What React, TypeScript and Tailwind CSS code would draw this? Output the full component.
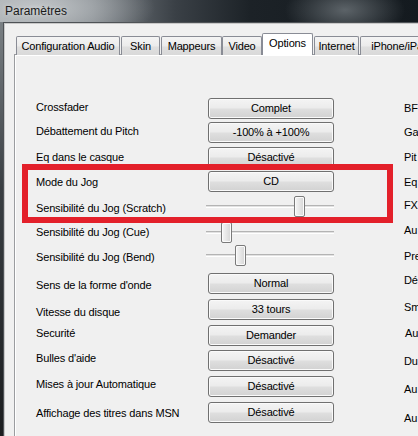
import React from 'react';

type Row = {
  label: string;
  h: string;
  lt: string;
  kind: 'btn' | 'slider';
  text?: string;
  value?: number;
};

const rows: Row[] = [
  { label: 'Crossfader', h: 'h-[24px]', lt: 'pt-[3px]', kind: 'btn', text: 'Complet' },
  { label: 'Débattement du Pitch', h: 'h-[25px]', lt: 'pt-[3px]', kind: 'btn', text: '-100% à +100%' },
  { label: 'Eq dans le casque', h: 'h-[24px]', lt: 'pt-[4px]', kind: 'btn', text: 'Désactivé' },
  { label: 'Mode du Jog', h: 'h-[25px]', lt: 'pt-[5px]', kind: 'btn', text: 'CD' },
  { label: 'Sensibilité du Jog (Scratch)', h: 'h-[26px]', lt: 'pt-[6px]', kind: 'slider', value: 88 },
  { label: 'Sensibilité du Jog (Cue)', h: 'h-[23px]', lt: 'pt-[4px]', kind: 'slider', value: 15 },
  { label: 'Sensibilité du Jog (Bend)', h: 'h-[28px]', lt: 'pt-[6px]', kind: 'slider', value: 29 },
  { label: "Sens de la forme d'onde", h: 'h-[26px]', lt: 'pt-[6px]', kind: 'btn', text: 'Normal' },
  { label: 'Vitesse du disque', h: 'h-[26px]', lt: 'pt-[7px]', kind: 'btn', text: '33 tours' },
  { label: 'Securité', h: 'h-[25px]', lt: 'pt-[2px]', kind: 'btn', text: 'Demander' },
  { label: "Bulles d'aide", h: 'h-[26px]', lt: 'pt-[2px]', kind: 'btn', text: 'Désactivé' },
  { label: 'Mises à jour Automatique', h: 'h-[26px]', lt: 'pt-[2px]', kind: 'btn', text: 'Désactivé' },
  { label: 'Affichage des titres dans MSN', h: 'h-[26px]', lt: 'pt-[5px]', kind: 'btn', text: 'Désactivé' },
];

const rightLabels: { t: string; h: string; x?: string }[] = [
  { t: 'BF', h: 'h-[24px]' },
  { t: 'Ga', h: 'h-[25px]' },
  { t: 'Pit', h: 'h-[25px]' },
  { t: 'Eq', h: 'h-[23px]' },
  { t: 'FX', h: 'h-[25px]' },
  { t: 'Au', h: 'h-[26px]' },
  { t: 'Pre', h: 'h-[24px]' },
  { t: 'Dé', h: 'h-[27px]' },
  { t: 'Sm', h: 'h-[26px]' },
  { t: 'Au', h: 'h-[28px]', x: 'pl-[1px]' },
  { t: 'Du', h: 'h-[28px]' },
  { t: 'Au', h: 'h-[29px]' },
  { t: 'Au', h: 'h-[20px]' },
];

const tabs: { t: string; w: string; sel?: boolean; ml?: string }[] = [
  { t: 'Configuration Audio', w: 'w-[104px]' },
  { t: 'Skin', w: 'w-[39px]', ml: 'ml-[1px]' },
  { t: 'Mappeurs', w: 'w-[61px]', ml: 'ml-[1px]' },
  { t: 'Video', w: 'w-[40px]' },
  { t: 'Options', w: 'w-[51px]', sel: true },
  { t: 'Internet', w: 'w-[45px]', ml: 'ml-[1px]' },
  { t: 'iPhone/iPad', w: 'w-[80px]', ml: 'ml-[1px]' },
];

function WinButton({ text }: { text: string }) {
  return (
    <div className="w-[126px] h-[21px] rounded-[3px] border border-[#707070] bg-[linear-gradient(#f4f4f4,#ececec_45%,#dedede_55%,#d2d2d2)] shadow-[inset_0_0_0_1px_#fafafa] flex items-center justify-center text-black leading-[13px]">
      {text}
    </div>
  );
}

function Slider({ value }: { value: number }) {
  return (
    <div className="relative -ml-[2px] w-[128px] h-[21px]">
      <div className="absolute left-0 right-0 top-[9px] h-[3px] border-t border-[#b4b4b4] border-b border-b-[#ffffff] bg-[#e2e2e2]" />
      <div
        className="absolute top-0 w-[11px] h-[21px] rounded-[2px] border border-[#7a7a7a] bg-[linear-gradient(90deg,#f6f6f6,#e6e6e6_50%,#d6d6d6)] shadow-[inset_0_0_0_1px_#fbfbfb]"
        style={{ left: `${value}px` }}
      />
    </div>
  );
}

export default function App() {
  return (
    <div className="relative w-[418px] h-[436px] overflow-hidden flex flex-col font-['Liberation_Sans',Arial,sans-serif] text-[11px] text-black tracking-[-0.15px]">
      {/* Title bar */}
      <div className="h-[22px] shrink-0 bg-[radial-gradient(ellipse_60px_30px_at_345px_10px,#5c6368,transparent),radial-gradient(ellipse_120px_40px_at_35px_8px,#c2c6c9,transparent),linear-gradient(90deg,#9ca1a4,#7a8085_22%,#3a4046_42%,#1c2227_60%,#141a1f_100%)] flex items-center pl-[5px]">
        <span className="text-[12px] leading-[14px] text-[#1a1a1a] tracking-normal [text-shadow:0_0_4px_rgba(230,232,234,0.7)]">Paramètres</span>
      </div>
      <div className="flex flex-1 min-h-0">
        <div className="w-[3px] shrink-0 bg-[linear-gradient(#7a8084,#3a3f43_40%,#1b1d1f)]" />
        <div className="flex-1 min-w-0 bg-[#f0f0f0] border-l border-t border-[#4e5256] shadow-[inset_1px_1px_0_#c8c8c8]">
          <div className="ml-[10px] pt-[10px] flex flex-col">
            {/* Tabs */}
            <div className="relative z-10 flex items-start h-[22px] pl-[2px] whitespace-nowrap">
              {tabs.map((tab, i) =>
                tab.sel ? (
                  <div
                    key={i}
                    className={`${tab.w} shrink-0 h-[22px] bg-white border border-b-0 border-[#898c95] rounded-t-[2px] flex justify-center pt-[3px] leading-[13px]`}
                  >
                    {tab.t}
                  </div>
                ) : (
                  <div
                    key={i}
                    className={`${tab.w} ${tab.ml ?? ''} shrink-0 h-[19px] mt-[3px] bg-[linear-gradient(#f4f4f4,#ebebeb_50%,#dfdfdf_55%,#d9d9d9)] border border-b-0 border-[#898c95] rounded-t-[2px] flex justify-center pt-[3px] leading-[13px] overflow-hidden`}
                  >
                    {tab.t}
                  </div>
                )
              )}
            </div>
            {/* Panel */}
            <div className="-mt-[1px] h-[400px] border-l border-t border-[#9a9c9f] shadow-[inset_1px_1px_0_#ffffff] bg-[#f0f0f0] flex pl-[21px] pt-[43px]">
              <div className="flex flex-col shrink-0">
                {rows.map((r, i) => (
                  <div key={i} className={`${r.h} flex`}>
                    <div className={`w-[172px] shrink-0 ${r.lt} leading-[13px] whitespace-nowrap`}>{r.label}</div>
                    <div className="w-[126px] shrink-0">
                      {r.kind === 'btn' ? <WinButton text={r.text!} /> : <Slider value={r.value!} />}
                    </div>
                  </div>
                ))}
              </div>
              <div className="ml-[70px] pt-[4px] flex flex-col shrink-0 whitespace-nowrap">
                {rightLabels.map((l, i) => (
                  <div key={i} className={`${l.h} ${l.x ?? ''} leading-[13px]`}>
                    {l.t}
                  </div>
                ))}
              </div>
            </div>
          </div>
        </div>
      </div>
      {/* Red annotation box */}
      <div className="absolute left-[22px] top-[164px] w-[371px] h-[59px] border-[6px] border-[#e3202a] pointer-events-none" />
    </div>
  );
}
